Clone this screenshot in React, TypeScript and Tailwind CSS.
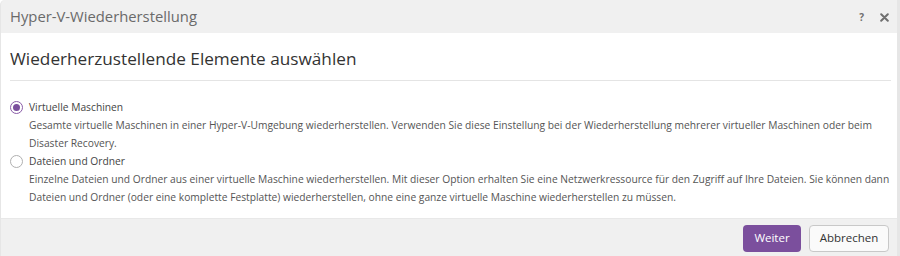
import { useState } from "react";

const options = [
  {
    id: "vm",
    label: "Virtuelle Maschinen",
    text: "Gesamte virtuelle Maschinen in einer Hyper-V-Umgebung wiederherstellen. Verwenden Sie diese Einstellung bei der Wiederherstellung mehrerer virtueller Maschinen oder beim Disaster Recovery.",
  },
  {
    id: "files",
    label: "Dateien und Ordner",
    text: "Einzelne Dateien und Ordner aus einer virtuelle Maschine wiederherstellen. Mit dieser Option erhalten Sie eine Netzwerkressource für den Zugriff auf Ihre Dateien. Sie können dann Dateien und Ordner (oder eine komplette Festplatte) wiederherstellen, ohne eine ganze virtuelle Maschine wiederherstellen zu müssen.",
  },
];

export default function App() {
  const [selected, setSelected] = useState("vm");

  return (
    <div className="w-[900px] h-[256px] bg-white font-['Open_Sans',sans-serif] overflow-hidden">
      <div className="h-full flex flex-col rounded-tl-[5px] border-l border-r-[3px] border-[#e6e6e6] bg-[#f0f0f0]">
        <header className="h-[33px] flex items-center pl-[9px] pr-[8px]">
          <span className="text-[14.8px] text-[#6a6a6a]">Hyper-V-Wiederherstellung</span>
          <div className="ml-auto flex items-center gap-[16px] text-[#6f6f6f]">
            <span className="text-[10px] font-bold leading-none">?</span>
            <svg width="9" height="9" viewBox="0 0 9 9" className="mt-[1px]">
              <path d="M1.2 1.2 L7.8 7.8 M7.8 1.2 L1.2 7.8" stroke="currentColor" strokeWidth="2" strokeLinecap="round" />
            </svg>
          </div>
        </header>

        <main className="bg-white h-[185px] pl-[9px] pr-[6px]">
          <h1 className="pt-[13px] pb-[9px] text-[17.2px] leading-[25px] text-[#333] border-b border-[#e4e4e4]">
            Wiederherzustellende Elemente auswählen
          </h1>
          <div className="pt-[17px]">
            {options.map((o) => (
              <label key={o.id} className="flex gap-[6px] cursor-pointer">
                <span className="pt-[3px]">
                  <span
                    className={
                      "w-[13px] h-[13px] rounded-full border flex items-center justify-center bg-white " +
                      (selected === o.id ? "border-[#8a5ca8]" : "border-[#b0b0b0]")
                    }
                    onClick={() => setSelected(o.id)}
                  >
                    {selected === o.id && <span className="w-[7px] h-[7px] rounded-full bg-[#7b4f9d]" />}
                  </span>
                </span>
                <div className="text-[10.25px] leading-[18px] text-[#555]">
                  <div className="text-[#444]">{o.label}</div>
                  <div>{o.text}</div>
                </div>
              </label>
            ))}
          </div>
        </main>

        <footer className="flex-1 border-t border-[#e8e8e8] flex items-center justify-end gap-[8px] pr-[8px] pt-[1px]">
          <button className="h-[27px] w-[58px] rounded-[4px] bg-[#7b4f9d] text-white text-[11.5px]">Weiter</button>
          <button className="h-[27px] w-[80px] rounded-[4px] border border-[#c8c8c8] bg-[#fafafa] text-[#333] text-[11.5px]">
            Abbrechen
          </button>
        </footer>
      </div>
    </div>
  );
}
